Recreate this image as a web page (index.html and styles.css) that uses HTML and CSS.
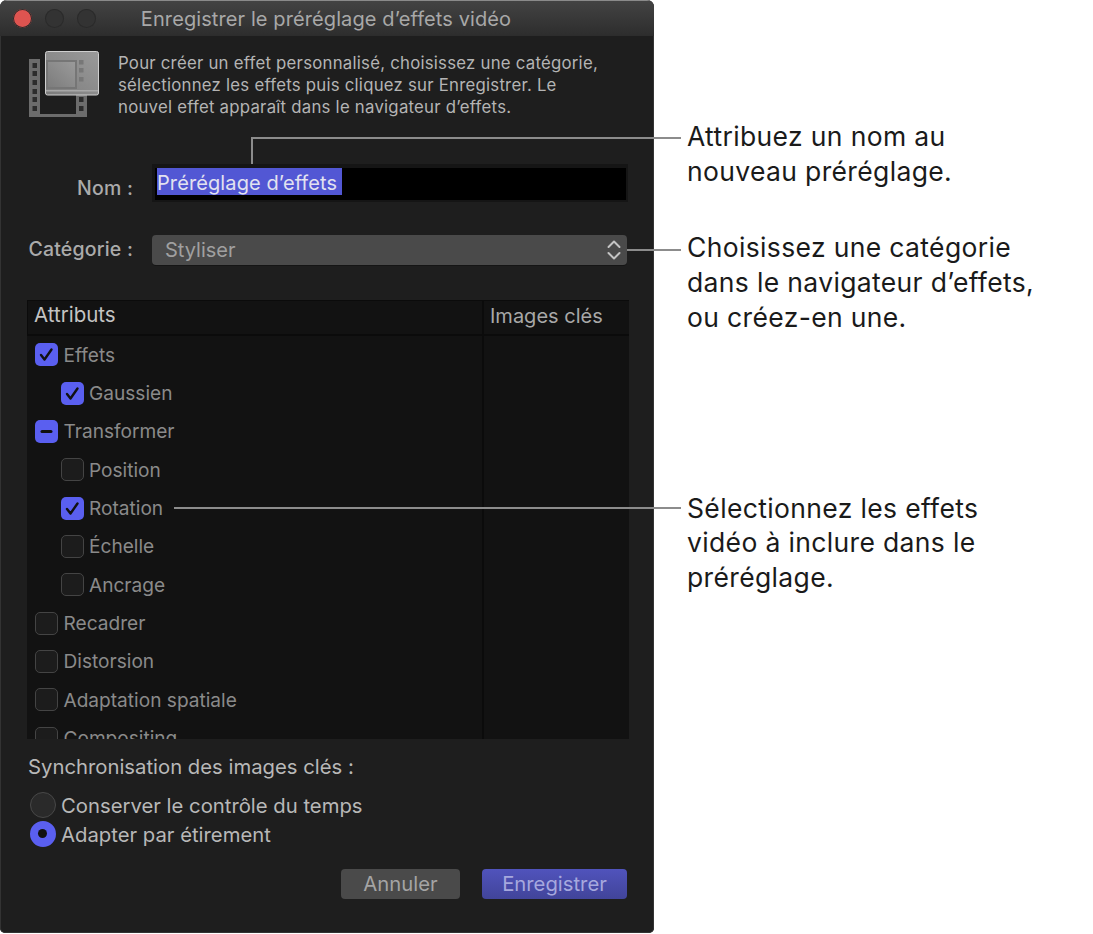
FILE: index.html
```html
<!DOCTYPE html>
<html lang="fr">
<head>
<meta charset="utf-8">
<title>Enregistrer le préréglage d’effets vidéo</title>
<link rel="stylesheet" href="styles.css">
</head>
<body>
<div class="page">
  <section class="window">
    <header class="titlebar">
      <span class="light red"></span>
      <span class="light"></span>
      <span class="light"></span>
      <h1 class="title">Enregistrer le préréglage d’effets vidéo</h1>
    </header>
    <div class="intro">
      <svg class="intro-icon" width="60" height="68" viewBox="0 0 60 68">
        <defs>
          <linearGradient id="glass" x1="0" y1="1" x2="1" y2="0">
            <stop offset="0" stop-color="#7c7c7c"/>
            <stop offset="1" stop-color="#9a9a9a"/>
          </linearGradient>
        </defs>
        <path fill="#6c6c6c" d="M0 9h58v58H0z"/>
        <rect x="11" y="9" width="36" height="55" fill="#1e1e1e"/>
        <g fill="#2c2c2c">
          <rect x="3.500" y="13" width="4.500" height="5"/><rect x="3.500" y="21" width="4.500" height="5"/><rect x="3.500" y="30" width="4.500" height="5"/><rect x="3.500" y="39" width="4.500" height="5"/><rect x="3.500" y="47" width="4.500" height="5"/><rect x="3.500" y="56" width="4.500" height="5"/>
          <rect x="50" y="47" width="4.500" height="5"/><rect x="50" y="56" width="4.500" height="5"/>
        </g>
        <rect x="16.500" y="1.500" width="53" height="43.500" rx="2" fill="url(#glass)" stroke="#cfcfcf" stroke-width="1"/>
        <rect x="17" y="10" width="31" height="29" fill="#767676"/>
        <rect x="19" y="12" width="27" height="25" fill="url(#glass)"/>
        <rect x="17" y="40" width="52" height="1.500" fill="#a8a8a8"/>
        <g fill="#777">
          <rect x="50" y="10" width="4.500" height="4.500"/><rect x="50" y="18" width="4.500" height="4.500"/><rect x="50" y="27" width="4.500" height="4.500"/>
        </g>
      </svg>
      <p class="intro-text">Pour créer un effet personnalisé, choisissez une catégorie, sélectionnez les effets puis cliquez sur Enregistrer. Le nouvel effet apparaît dans le navigateur d’effets.</p>
    </div>
    <div class="form-row name-row">
      <label class="form-label">Nom :</label>
      <div class="name-input"><span class="selection">Préréglage d’effets</span></div>
    </div>
    <div class="form-row cat-row">
      <label class="form-label">Catégorie :</label>
      <div class="select">
        <span>Styliser</span>
        <svg width="14" height="22" viewBox="0 0 14 22" fill="none" stroke="#c4c4c4" stroke-width="2" stroke-linecap="round" stroke-linejoin="round"><path d="M1.500 8l5.500-5.500 5.500 5.500"/><path d="M1.500 14l5.500 5.500 5.500-5.500"/></svg>
      </div>
    </div>
    <div class="table">
      <div class="thead">
        <div class="th-attr">Attributs</div>
        <div class="th-key">Images clés</div>
      </div>
      <div class="tbody">
        <div class="rows">
          <div class="row"><span class="box on"><svg width="23" height="23" viewBox="0 0 23 23"><path class="tick" d="M6 12l3.500 4.500 7-10"/></svg></span>Effets</div>
          <div class="row sub"><span class="box on"><svg width="23" height="23" viewBox="0 0 23 23"><path class="tick" d="M6 12l3.500 4.500 7-10"/></svg></span>Gaussien</div>
          <div class="row"><span class="box on"><svg width="23" height="23" viewBox="0 0 23 23"><path class="tick dash" d="M7 11.500h9"/></svg></span>Transformer</div>
          <div class="row sub"><span class="box"></span>Position</div>
          <div class="row sub"><span class="box on"><svg width="23" height="23" viewBox="0 0 23 23"><path class="tick" d="M6 12l3.500 4.500 7-10"/></svg></span>Rotation</div>
          <div class="row sub"><span class="box"></span>Échelle</div>
          <div class="row sub"><span class="box"></span>Ancrage</div>
          <div class="row"><span class="box"></span>Recadrer</div>
          <div class="row"><span class="box"></span>Distorsion</div>
          <div class="row"><span class="box"></span>Adaptation spatiale</div>
          <div class="row"><span class="box"></span>Compositing</div>
        </div>
        <div class="key-col"></div>
      </div>
    </div>
    <div class="sync-label">Synchronisation des images clés :</div>
    <div class="radio-row"><span class="radio"></span>Conserver le contrôle du temps</div>
    <div class="radio-row"><span class="radio on"></span>Adapter par étirement</div>
    <div class="buttons">
      <div class="btn">Annuler</div>
      <div class="btn primary">Enregistrer</div>
    </div>
  </section>
  <aside class="callouts">
    <p class="callout c1">Attribuez un nom au nouveau préréglage.</p>
    <p class="callout c2">Choisissez une catégorie dans le navigateur d’effets, ou créez-en une.</p>
    <p class="callout c3">Sélectionnez les effets vidéo à inclure dans le préréglage.</p>
  </aside>
  <div class="leader l1v"></div>
  <div class="leader l1h"></div>
  <div class="leader l2"></div>
  <div class="leader l3"></div>
</div>
</body>
</html>
```
FILE: styles.css
```css
* { box-sizing: border-box; }
html, body { margin: 0; padding: 0; background: #fff; }
body { font-family: Inter, "Liberation Sans", sans-serif; }
.page { position: relative; width: 1093px; height: 934px; display: flex; overflow: hidden; }

.window { width: 654px; height: 933px; flex: none; background: #1e1e1e; border-radius: 7px 7px 5px 5px; overflow: hidden; box-shadow: inset 0 0 0 1px #333; }
.titlebar { height: 36px; display: flex; align-items: center; gap: 13px; padding-left: 13px; position: relative; background: linear-gradient(#434343, #2d2d2d); border-top: 1px solid #8a8a8a; }
.light { width: 19px; height: 19px; border-radius: 50%; background: #333; box-shadow: inset 0 0 0 1px #2a2a2a; }
.light.red { background: #de5450; }
.title { position: absolute; left: 0; right: 0; top: 6px; margin: 0; text-align: center; font-size: 20px; letter-spacing: 0.1px; line-height: 24px; font-weight: 400; color: #a8a8a8; padding-right: 2px; white-space: nowrap; }

.intro { display: flex; height: 128px; padding: 14px 0 0 29px; }
.intro-icon { flex: none; overflow: visible; }
.intro-text { margin: 2px 0 0 29px; width: 490px; font-size: 16.800px; letter-spacing: 0.23px; line-height: 22px; color: #b4b4b4; }

.form-row { display: flex; align-items: center; }
.form-label { width: 133px; text-align: right; font-size: 19.500px; letter-spacing: 0.2px; font-weight: 500; color: #ababab; flex: none; white-space: nowrap; }
.name-row { height: 38px; }
.name-row .form-label { padding-top: 9px; }
.name-input { margin-left: 19px; width: 476px; height: 38px; background: #000; border: solid #151515; border-width: 4px 2px 2px 3px; padding-left: 2px; }
.selection { display: block; height: 27px; width: 185px; background: #5257d4; color: #e2e2f0; font-size: 20px; letter-spacing: 0.1px; line-height: 30px; white-space: nowrap; overflow: hidden; }
.cat-row { height: 30px; margin-top: 33px; }
.cat-row .form-label { padding-bottom: 3px; }
.select { margin-left: 19px; width: 475px; height: 30px; background: #4a4a4a; border-radius: 4px; display: flex; align-items: center; justify-content: space-between; padding: 0 6px 0 13px; font-size: 20px; color: #a0a0a0; box-shadow: 0 1px 0 #151515; }

.table { margin: 35px 0 0 27px; width: 602px; height: 439px; background: #121212; overflow: hidden; }
.thead { display: flex; height: 36px; border: 2px solid #0b0b0b; border-width: 1px 0 2px 1px; }
.th-attr { width: 454px; padding-left: 6px; font-size: 20.500px; line-height: 28px; color: #c4c4c4; }
.th-key { flex: 1; padding-left: 6px; border-left: 2px solid #0b0b0b; font-size: 20px; line-height: 31px; color: #a8a8a8; }
.tbody { display: flex; height: 403px; }
.rows { width: 455px; margin-top: -0.500px; }
.key-col { flex: 1; border-left: 2px solid #0b0b0b; }
.row { height: 38.350px; display: flex; align-items: center; gap: 5.500px; padding-left: 8px; font-size: 19.100px; color: #8a8a8a; white-space: nowrap; }
.row.sub { padding-left: 33.500px; }
.box { width: 23px; height: 23px; flex: none; border-radius: 5px; border: 1.500px solid #444; background: #1c1c1c; }
.box.on { border: none; background: #5a5ff0; }
.box svg { display: block; }
.tick { fill: none; stroke: #111; stroke-width: 2.400; stroke-linecap: round; stroke-linejoin: round; }
.tick.dash { stroke-width: 3; stroke-linecap: round; }

.sync-label { margin: 16px 0 0 28px; font-size: 20.300px; line-height: 24px; color: #b8b8b8; white-space: nowrap; }
.radio-row { display: flex; align-items: center; gap: 5px; padding-left: 30px; height: 28.700px; font-size: 20.300px; color: #b8b8b8; white-space: nowrap; }
.sync-label + .radio-row { margin-top: 12px; }
.radio { width: 26px; height: 26px; flex: none; border-radius: 50%; background: #2a2a2a; border: 1.500px solid #484848; }
.radio.on { background: #5a5ff0; border: 8.500px solid #5a5ff0; }
.radio.on::after { content: ""; display: block; width: 9px; height: 9px; border-radius: 50%; background: #111; }

.buttons { display: flex; justify-content: flex-end; gap: 22px; padding-right: 27px; margin-top: 20.600px; }
.btn { width: 119px; height: 30px; border-radius: 4px; background: #4a4a4a; color: #a4a4a4; font-size: 20.300px; line-height: 30px; text-align: center; }
.btn.primary { width: 145px; background: linear-gradient(#5053bc, #41449a); color: #a6a8de; }

.callouts { flex: 1; padding-left: 33px; }
.callout { margin: 0; font-size: 26.500px; letter-spacing: 0.35px; line-height: 34.700px; color: #1a1a1a; width: 355px; }
.c1 { margin-top: 119px; }
.c2 { margin-top: 42px; }
.c3 { margin-top: 156px; }

.leader { position: absolute; background: #8c8c8c; }
.l1v { left: 251px; top: 137px; width: 2px; height: 27px; }
.l1h { left: 251px; top: 137px; width: 430px; height: 2px; }
.l2 { left: 627px; top: 249px; width: 54px; height: 2px; }
.l3 { left: 174px; top: 507px; width: 507px; height: 2px; }
```
